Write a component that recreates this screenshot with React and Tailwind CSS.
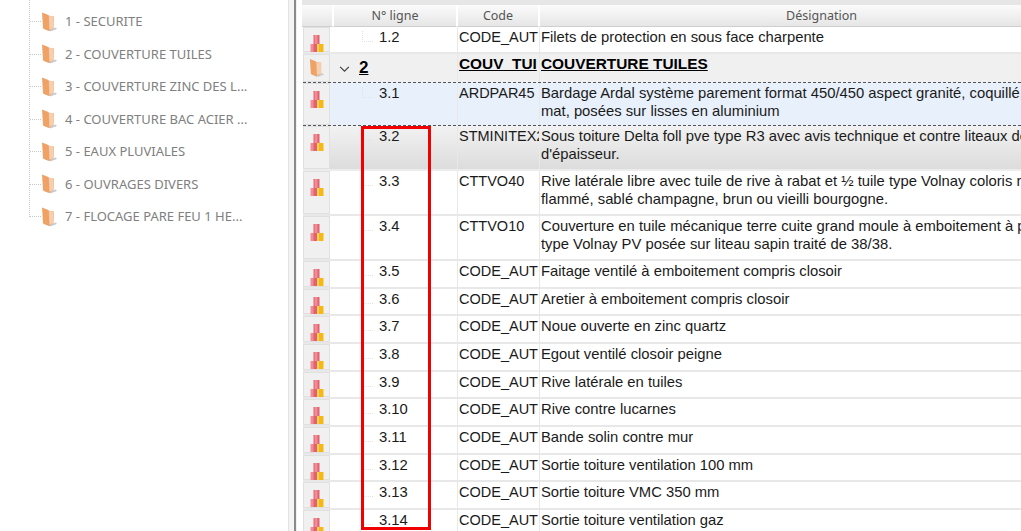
const tree = ["1 - SECURITE","2 - COUVERTURE TUILES","3 - COUVERTURE ZINC DES L...","4 - COUVERTURE BAC ACIER ...","5 - EAUX PLUVIALES","6 - OUVRAGES DIVERS","7 - FLOCAGE PARE FEU 1 HE..."];

function Folder({ className }) {
  return (
    <svg viewBox="0 0 16 20" className={className}>
      <path d="M4 3 L13 4.5 L13 16 L8 19 L3 17 Z" fill="#eeb183" />
      <path d="M1 0.5 L7.5 3 L8.5 19 L2 16.5 Z" fill="#eea266" />
      <path d="M8 4 L12.5 4.5 L13 15.5 L8.5 17.5 Z" fill="#f8cfae" />
      <path d="M9 18 L15 15.5 L15.8 17 L9 19.5 Z" fill="#c2c6cf" />
    </svg>
  );
}

function Blocks() {
  return (
    <svg viewBox="0 0 14 17" className="w-[14px] h-[17px]">
      <rect x="3.5" y="0" width="6" height="9" fill="#e4616f" />
      <rect x="4.5" y="0" width="3" height="9" fill="#f08c96" />
      <rect x="0.5" y="9" width="6.5" height="8" fill="#f08c96" />
      <rect x="3.5" y="9" width="3.5" height="8" fill="#e4616f" />
      <rect x="7" y="9" width="6.5" height="8" fill="#f5b915" />
      <rect x="7" y="9" width="2" height="8" fill="#f9d35c" />
    </svg>
  );
}

const rows = [
  { n: "1.2", c: "CODE_AUT", d: ["Filets de protection en sous face charpente"], h: "h-[27px]" },
  { group: true, n: "2", c: "COUV_TUI", d: ["COUVERTURE TUILES"], h: "h-[28px]" },
  { sel: true, n: "3.1", c: "ARDPAR45", d: ["Bardage Ardal système parement format 450/450 aspect granité, coquillé, ardoise ou gris", "mat, posées sur lisses en aluminium"], h: "h-[44px]" },
  { hov: true, n: "3.2", c: "STMINITEX2", d: ["Sous toiture Delta foll pve type R3 avec avis technique et contre liteaux de 20 mm", "d'épaisseur."], h: "h-[45px]" },
  { n: "3.3", c: "CTTVO40", d: ["Rive latérale libre avec tuile de rive à rabat et ½ tuile type Volnay coloris rouge", "flammé, sablé champagne, brun ou vieilli bourgogne."], h: "h-[45px]" },
  { n: "3.4", c: "CTTVO10", d: ["Couverture en tuile mécanique terre cuite grand moule à emboitement à pureau variable", "type Volnay PV posée sur liteau sapin traité de 38/38."], h: "h-[45px]" },
  { n: "3.5", c: "CODE_AUT", d: ["Faitage ventilé à emboitement compris closoir"], h: "h-[28px]" },
  { n: "3.6", c: "CODE_AUT", d: ["Aretier à emboitement compris closoir"], h: "h-[27px]" },
  { n: "3.7", c: "CODE_AUT", d: ["Noue ouverte en zinc quartz"], h: "h-[28px]" },
  { n: "3.8", c: "CODE_AUT", d: ["Egout ventilé closoir peigne"], h: "h-[28px]" },
  { n: "3.9", c: "CODE_AUT", d: ["Rive latérale en tuiles"], h: "h-[27px]" },
  { n: "3.10", c: "CODE_AUT", d: ["Rive contre lucarnes"], h: "h-[28px]" },
  { n: "3.11", c: "CODE_AUT", d: ["Bande solin contre mur"], h: "h-[28px]" },
  { n: "3.12", c: "CODE_AUT", d: ["Sortie toiture ventilation 100 mm"], h: "h-[27px]" },
  { n: "3.13", c: "CODE_AUT", d: ["Sortie toiture VMC 350 mm"], h: "h-[28px]" },
  { n: "3.14", c: "CODE_AUT", d: ["Sortie toiture ventilation gaz"], h: "h-[28px]" },
];

function Row({ r }) {
  const bg = r.sel
    ? "bg-[#e8f0fb] border-y border-dashed border-[#555555]"
    : r.hov
    ? "bg-gradient-to-b from-[#f2f2f2] to-[#dcdcdc] border-b-2 border-[#ececec]"
    : r.group
    ? "bg-[#f0f0f0]"
    : "bg-white border-b-2 border-[#e8e8e8]";
  const txt = r.group
    ? "font-bold underline text-[15.4px] text-black"
    : "text-[14.8px] text-[#1a1a1a]";
  const codeTxt = r.group
    ? "font-bold underline text-[15.4px] text-black"
    : "text-[14.5px] text-[#1a1a1a]";
  return (
    <div className={`flex shrink-0 ml-[1px] ${r.h} ${bg}`}>
      <div className={`w-[27px] shrink-0 flex items-start justify-center bg-[#f0f0f0] border border-[#e0e0e0] ${r.group ? "pt-[3px]" : "pt-[7px]"}`}>
        {r.group ? <Folder className="w-[15px] h-[20px]" /> : <Blocks />}
      </div>
      <div className="w-[128px] shrink-0 border-r border-[#e8e8e8] flex items-start pt-[1px]">
        {r.group ? (
          <div className="flex items-center pl-[9px]">
            <svg viewBox="0 0 12 8" className="w-[11px] h-[7px] mt-[3px]"><path d="M1 1 L6 6 L11 1" fill="none" stroke="#444444" strokeWidth="1.4" /></svg>
            <span className="ml-[9px] font-bold underline text-[17px] text-black">{r.n}</span>
          </div>
        ) : (
          <div className="flex items-start pl-[32px]">
            <div className="w-[11px] h-[11px] mt-[3px] mr-[6px] border-l border-b border-dotted border-[#e2e2e2]" />
            <span className={`leading-[18px] ${txt}`}>{r.n}</span>
          </div>
        )}
      </div>
      <div className={`w-[82px] shrink-0 border-r border-[#e8e8e8] pl-[1px] pt-[1px] overflow-hidden whitespace-nowrap leading-[18px] ${codeTxt}`}>
        {r.c}
      </div>
      <div className={`flex-1 min-w-0 pl-[1px] overflow-hidden whitespace-nowrap pt-[1px] leading-[18px] ${txt}`}>
        {r.d.map((l) => <div key={l}>{l}</div>)}
      </div>
    </div>
  );
}

function Head({ className, children }) {
  return (
    <div className={`h-[22px] pt-[2px] shrink-0 flex items-center justify-center bg-gradient-to-b from-[#fbfbfb] to-[#e6e6e6] border-b border-[#cfcfcf] border-r-2 border-r-white text-[12.5px] text-[#555555] font-['Noto_Sans',sans-serif] ${className}`}>
      {children}
    </div>
  );
}

export default function App() {
  return (
    <div className="relative w-[1021px] h-[531px] overflow-hidden flex bg-white font-['Liberation_Sans',sans-serif]">
      <div className="w-[289px] shrink-0 h-full border-r border-[#e3e3e3] pl-[29px]">
        <div className="border-l border-dotted border-[#c8c8c8] h-[217px]">
          <div className="h-[5.5px]" />
          {tree.map((t) => (
            <div key={t} className="flex items-center h-[32.5px]">
              <div className="w-[11px] border-t border-dotted border-[#c8c8c8]" />
              <Folder className="w-[16px] h-[20px] shrink-0" />
              <span className="ml-[8px] whitespace-nowrap text-[13px] text-[#808080] font-['Noto_Sans',sans-serif]">{t}</span>
            </div>
          ))}
        </div>
      </div>
      <div className="w-[5px] shrink-0 bg-[#f4f4f4]" />
      <div className="w-[2px] shrink-0 bg-[#8a8a8a]" />
      <div className="w-[1px] shrink-0 bg-[#f0f0f0]" />
      <div className="w-[5px] shrink-0 bg-white" />
      <div className="flex-1 min-w-0 flex flex-col overflow-hidden">
        <div className="h-[5px] shrink-0 bg-[#e6e6e6]" />
        <div className="flex shrink-0">
          <Head className="w-[32px]" />
          <Head className="w-[124px]">N° ligne</Head>
          <Head className="w-[82px]">Code</Head>
          <Head className="w-[565px]">Désignation</Head>
        </div>
        {rows.map((r) => <Row key={r.n} r={r} />)}
      </div>
      <div className="absolute left-[361px] top-[126px] w-[70px] h-[404px] border-[3px] border-[#f00000]" />
    </div>
  );
}
